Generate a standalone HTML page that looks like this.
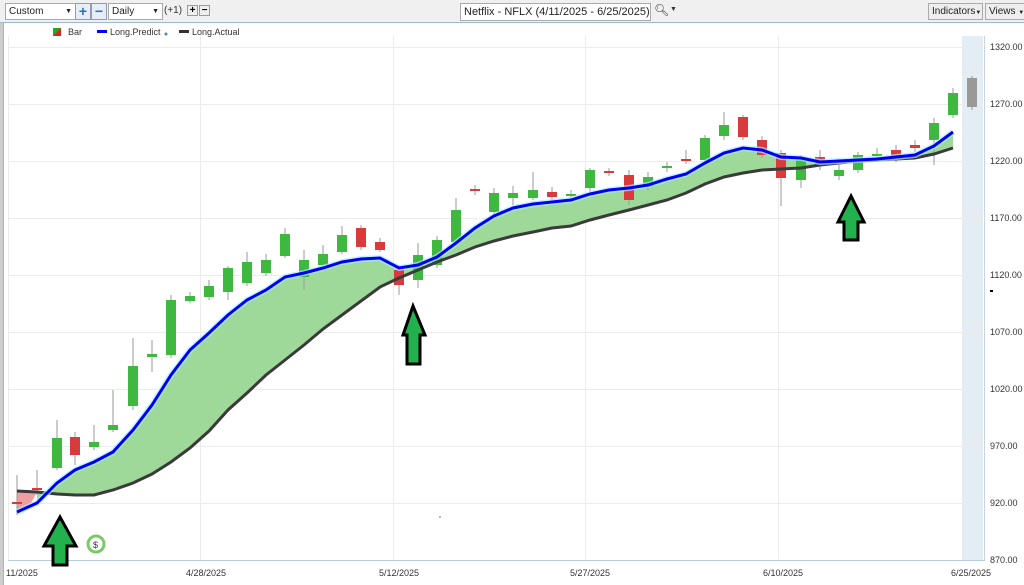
<!DOCTYPE html>
<html><head><meta charset="utf-8"><style>
body{margin:0;width:1024px;height:585px;overflow:hidden;background:#fff;font-family:"Liberation Sans",sans-serif;position:relative}
.tb{position:absolute;left:0;top:0;width:1024px;height:22px;background:#f0f0f0;border-bottom:1px solid #9ab8d8}
.b{position:absolute;top:3px;height:15px;border:1px solid #aaa;background:#fff;font-size:10px;line-height:15px;padding-left:3px;box-sizing:content-box;color:#222}
.sq{position:absolute;top:3px;width:14px;height:15px;border:1px solid #99a;background:#e6eef8;color:#2a6fc0;font-size:14px;line-height:14px;text-align:center;font-weight:bold}
.lab{position:absolute;font-size:9px;color:#333}
</style></head><body>
<div class="tb">
<div class="b" style="left:5px;width:66px">Custom<span style="position:absolute;right:3px;font-size:7px">▼</span></div>
<div class="sq" style="left:75px">+</div><div class="sq" style="left:91px">−</div>
<div class="b" style="left:108px;width:50px">Daily<span style="position:absolute;right:3px;font-size:7px">▼</span></div>
<div class="lab" style="left:164px;top:5px;font-size:10px">(+1)</div>
<div class="sq" style="left:187px;top:5px;width:9px;height:9px;font-size:10px;line-height:9px;color:#000;background:#eee">+</div>
<div class="sq" style="left:199px;top:5px;width:9px;height:9px;font-size:10px;line-height:9px;color:#000;background:#eee">−</div>
<div class="b" style="left:460px;width:186px;top:3px;height:16px;line-height:16px;font-size:11px">Netflix - NFLX (4/11/2025 - 6/25/2025)</div>
<div class="lab" style="left:654px;top:3px;font-size:12px">&#x1F50D;&#xFE0E;</div>
<div class="lab" style="left:670px;top:6px;font-size:7px">▼</div>
<div class="b" style="left:928px;width:50px;background:#eee;font-size:10px">Indicators<span style="font-size:6px">▼</span></div>
<div class="b" style="left:985px;width:36px;background:#eee;font-size:10px">Views <span style="font-size:6px">▼</span></div>
</div>
<div style="position:absolute;left:0;top:23px;width:3px;height:562px;background:#ccc"></div>
<div style="position:absolute;left:3px;top:23px;width:1px;height:562px;background:#9ab8d8"></div>
<svg width="1024" height="585" style="position:absolute;left:0;top:0" font-family="Liberation Sans, sans-serif">
<rect x="962" y="36" width="21" height="524" fill="#e4ecf4"/>
<g stroke="#ececec" stroke-width="1">
<line x1="8" y1="47.5" x2="983" y2="47.5"/><line x1="8" y1="104.5" x2="983" y2="104.5"/><line x1="8" y1="161.5" x2="983" y2="161.5"/><line x1="8" y1="218.5" x2="983" y2="218.5"/><line x1="8" y1="275.5" x2="983" y2="275.5"/><line x1="8" y1="332.5" x2="983" y2="332.5"/><line x1="8" y1="389.5" x2="983" y2="389.5"/><line x1="8" y1="446.5" x2="983" y2="446.5"/><line x1="8" y1="503.5" x2="983" y2="503.5"/>
<line x1="200.5" y1="36" x2="200.5" y2="560"/><line x1="393.5" y1="36" x2="393.5" y2="560"/><line x1="585.5" y1="36" x2="585.5" y2="560"/><line x1="778.5" y1="36" x2="778.5" y2="560"/><line x1="8.5" y1="36" x2="8.5" y2="560"/>
</g>
<line x1="8" y1="560.5" x2="985" y2="560.5" stroke="#b8cce0"/>
<line x1="984.5" y1="36" x2="984.5" y2="560" stroke="#c8d4e0"/>
<g font-size="9" fill="#333">
<text x="990" y="50">1320.00</text><text x="990" y="107">1270.00</text><text x="990" y="164">1220.00</text><text x="990" y="221">1170.00</text><text x="990" y="278">1120.00</text><text x="990" y="335">1070.00</text><text x="990" y="392">1020.00</text><text x="990" y="449">970.00</text><text x="990" y="506">920.00</text><text x="990" y="563">870.00</text>
<text x="6" y="576">11/2025</text><text x="186" y="576">4/28/2025</text><text x="379" y="576">5/12/2025</text><text x="570" y="576">5/27/2025</text><text x="763" y="576">6/10/2025</text><text x="951" y="576">6/25/2025</text>
</g>
<rect x="53" y="28" width="8" height="8" fill="#2a2"/><polygon points="53,36 61,28 61,36" fill="#d22"/>
<text x="68" y="35" font-size="9" fill="#333">Bar</text>
<rect x="97" y="30" width="10" height="3" fill="#00f"/><text x="110" y="35" font-size="9" fill="#333">Long.Predict</text><circle cx="166" cy="34" r="1.5" fill="#4a8ab0"/>
<rect x="179" y="30" width="10" height="3" fill="#333"/><text x="192" y="35" font-size="9" fill="#333">Long.Actual</text>
<polygon points="37,503 57,483 75,470 94,462 113,452 133,430 152,405 171,375 190,350 209,333 228,315 247,300 266,290 285,277 304,273 323,268 342,262 361,259 380,258 399,268 418,265 437,257 456,243 475,228 494,216 513,208 533,204 552,202 571,200 590,194 609,190 629,188 648,185 667,179 686,174 705,163 724,153 743,148 762,150 781,157 801,158 820,162 839,161 858,160 877,159 896,157 915,155 934,146 953,132 953,148 934,154 915,158 896,159 877,160 858,161 839,163 820,165 801,168 781,169 762,170 743,173 724,177 705,184 686,193 667,200 648,205 629,210 609,215 590,220 571,226 552,228 533,232 513,236 494,241 475,247 456,255 437,262 418,270 399,278 380,287 361,301 342,315 323,329 304,345 285,360 266,375 247,393 228,410 209,431 190,448 171,462 152,474 133,483 113,490 94,495 75,495 57,494 37,492" fill="#9ed99a"/>
<polygon points="17,491 37,492 30,505 17,512" fill="#eea0a0"/>
<g stroke="#999" stroke-width="1">
<line x1="17" y1="475" x2="17" y2="515"/><line x1="37" y1="470" x2="37" y2="495"/><line x1="57" y1="420" x2="57" y2="470"/><line x1="75" y1="432" x2="75" y2="465"/><line x1="94" y1="425" x2="94" y2="450"/><line x1="113" y1="390" x2="113" y2="432"/><line x1="133" y1="338" x2="133" y2="410"/><line x1="152" y1="340" x2="152" y2="372"/><line x1="171" y1="295" x2="171" y2="358"/><line x1="190" y1="292" x2="190" y2="303"/><line x1="209" y1="280" x2="209" y2="300"/><line x1="228" y1="266" x2="228" y2="300"/><line x1="247" y1="252" x2="247" y2="286"/><line x1="266" y1="254" x2="266" y2="276"/><line x1="285" y1="228" x2="285" y2="258"/><line x1="304" y1="250" x2="304" y2="290"/><line x1="323" y1="245" x2="323" y2="268"/><line x1="342" y1="226" x2="342" y2="254"/><line x1="361" y1="225" x2="361" y2="250"/><line x1="380" y1="238" x2="380" y2="252"/><line x1="399" y1="265" x2="399" y2="295"/><line x1="418" y1="243" x2="418" y2="288"/><line x1="437" y1="236" x2="437" y2="268"/><line x1="456" y1="198" x2="456" y2="245"/><line x1="475" y1="185" x2="475" y2="195"/><line x1="494" y1="188" x2="494" y2="215"/><line x1="513" y1="186" x2="513" y2="205"/><line x1="533" y1="172" x2="533" y2="200"/><line x1="552" y1="187" x2="552" y2="200"/><line x1="571" y1="190" x2="571" y2="200"/><line x1="590" y1="168" x2="590" y2="192"/><line x1="609" y1="168" x2="609" y2="176"/><line x1="629" y1="170" x2="629" y2="205"/><line x1="648" y1="172" x2="648" y2="190"/><line x1="667" y1="162" x2="667" y2="172"/><line x1="686" y1="150" x2="686" y2="164"/><line x1="705" y1="135" x2="705" y2="162"/><line x1="724" y1="112" x2="724" y2="140"/><line x1="743" y1="115" x2="743" y2="140"/><line x1="762" y1="136" x2="762" y2="158"/><line x1="781" y1="150" x2="781" y2="206"/><line x1="801" y1="155" x2="801" y2="188"/><line x1="820" y1="150" x2="820" y2="170"/><line x1="839" y1="165" x2="839" y2="180"/><line x1="858" y1="152" x2="858" y2="173"/><line x1="877" y1="148" x2="877" y2="162"/><line x1="896" y1="145" x2="896" y2="162"/><line x1="915" y1="140" x2="915" y2="152"/><line x1="934" y1="118" x2="934" y2="165"/><line x1="953" y1="88" x2="953" y2="118"/><line x1="972" y1="76" x2="972" y2="110"/>
</g>
<g fill="#3fb83f">
<rect x="52" y="438" width="10" height="30"/><rect x="89" y="442" width="10" height="5"/><rect x="108" y="425" width="10" height="5"/><rect x="128" y="366" width="10" height="40"/><rect x="147" y="354" width="10" height="3"/><rect x="166" y="300" width="10" height="55"/><rect x="185" y="296" width="10" height="5"/><rect x="204" y="286" width="10" height="11"/><rect x="223" y="268" width="10" height="24"/><rect x="242" y="262" width="10" height="21"/><rect x="261" y="260" width="10" height="13"/><rect x="280" y="234" width="10" height="22"/><rect x="299" y="260" width="10" height="17"/><rect x="318" y="254" width="10" height="11"/><rect x="337" y="235" width="10" height="17"/><rect x="413" y="255" width="10" height="25"/><rect x="432" y="240" width="10" height="25"/><rect x="451" y="210" width="10" height="32"/><rect x="489" y="193" width="10" height="19"/><rect x="508" y="193" width="10" height="5"/><rect x="528" y="190" width="10" height="8"/><rect x="585" y="170" width="10" height="18"/><rect x="643" y="177" width="10" height="10"/><rect x="662" y="166" width="10" height="2"/><rect x="700" y="138" width="10" height="22"/><rect x="719" y="125" width="10" height="11"/><rect x="796" y="160" width="10" height="20"/><rect x="834" y="170" width="10" height="6"/><rect x="853" y="155" width="10" height="15"/><rect x="929" y="123" width="10" height="17"/><rect x="948" y="93" width="10" height="22"/>
</g>
<g fill="#d93a3c">
<rect x="12" y="502" width="10" height="2"/><rect x="70" y="437" width="10" height="18"/><rect x="356" y="228" width="10" height="19"/><rect x="375" y="242" width="10" height="8"/><rect x="394" y="270" width="10" height="15"/><rect x="547" y="192" width="10" height="5"/><rect x="604" y="171" width="10" height="2"/><rect x="624" y="175" width="10" height="25"/><rect x="681" y="159" width="10" height="2"/><rect x="738" y="117" width="10" height="20"/><rect x="757" y="140" width="10" height="15"/><rect x="776" y="153" width="10" height="25"/><rect x="815" y="157" width="10" height="9"/><rect x="891" y="150" width="10" height="8"/><rect x="910" y="145" width="10" height="3"/>
</g>
<rect x="32" y="488" width="10" height="2" fill="#d93a3c"/><rect x="470" y="189" width="10" height="2" fill="#d93a3c"/><rect x="566" y="194" width="10" height="2" fill="#3fb83f"/><rect x="872" y="154" width="10" height="2" fill="#3fb83f"/>
<rect x="967" y="78" width="10" height="29" fill="#999"/>
<polyline points="17,491 37,492 57,494 75,495 94,495 113,490 133,483 152,474 171,462 190,448 209,431 228,410 247,393 266,375 285,360 304,345 323,329 342,315 361,301 380,287 399,278 418,270 437,262 456,255 475,247 494,241 513,236 533,232 552,228 571,226 590,220 609,215 629,210 648,205 667,200 686,193 705,184 724,177 743,173 762,170 781,169 801,168 820,165 839,163 858,161 877,160 896,159 915,158 934,154 953,148" fill="none" stroke="#3a3a3a" stroke-width="3"/>
<polyline points="17,512 37,503 57,483 75,470 94,462 113,452 133,430 152,405 171,375 190,350 209,333 228,315 247,300 266,290 285,277 304,273 323,268 342,262 361,259 380,258 399,268 418,265 437,257 456,243 475,228 494,216 513,208 533,204 552,202 571,200 590,194 609,190 629,188 648,185 667,179 686,174 705,163 724,153 743,148 762,150 781,157 801,158 820,162 839,161 858,160 877,159 896,157 915,155 934,146 953,132" fill="none" stroke="#aef" stroke-width="6" opacity="0.7"/>
<polyline points="17,512 37,503 57,483 75,470 94,462 113,452 133,430 152,405 171,375 190,350 209,333 228,315 247,300 266,290 285,277 304,273 323,268 342,262 361,259 380,258 399,268 418,265 437,257 456,243 475,228 494,216 513,208 533,204 552,202 571,200 590,194 609,190 629,188 648,185 667,179 686,174 705,163 724,153 743,148 762,150 781,157 801,158 820,162 839,161 858,160 877,159 896,157 915,155 934,146 953,132" fill="none" stroke="#0000f0" stroke-width="3"/>
<g fill="#22b14c" stroke="#000" stroke-width="3" stroke-linejoin="miter">
<polygon points="60,517 44,546 53,546 53,565 67,565 67,546 76,546"/>
<polygon points="413,306 403,335 407,335 407,364 420,364 420,335 425,335"/>
<polygon points="851,196 838,222 844,222 844,240 858,240 858,222 864,222"/>
</g>
<circle cx="96" cy="544" r="8" fill="#fff" stroke="#7cc96c" stroke-width="3"/>
<text x="93" y="548" font-size="9" fill="#333">$</text>
<circle cx="440" cy="517" r="0.8" fill="#666"/>
<rect x="990" y="290" width="3" height="2" fill="#000"/>
</svg>
</body></html>
